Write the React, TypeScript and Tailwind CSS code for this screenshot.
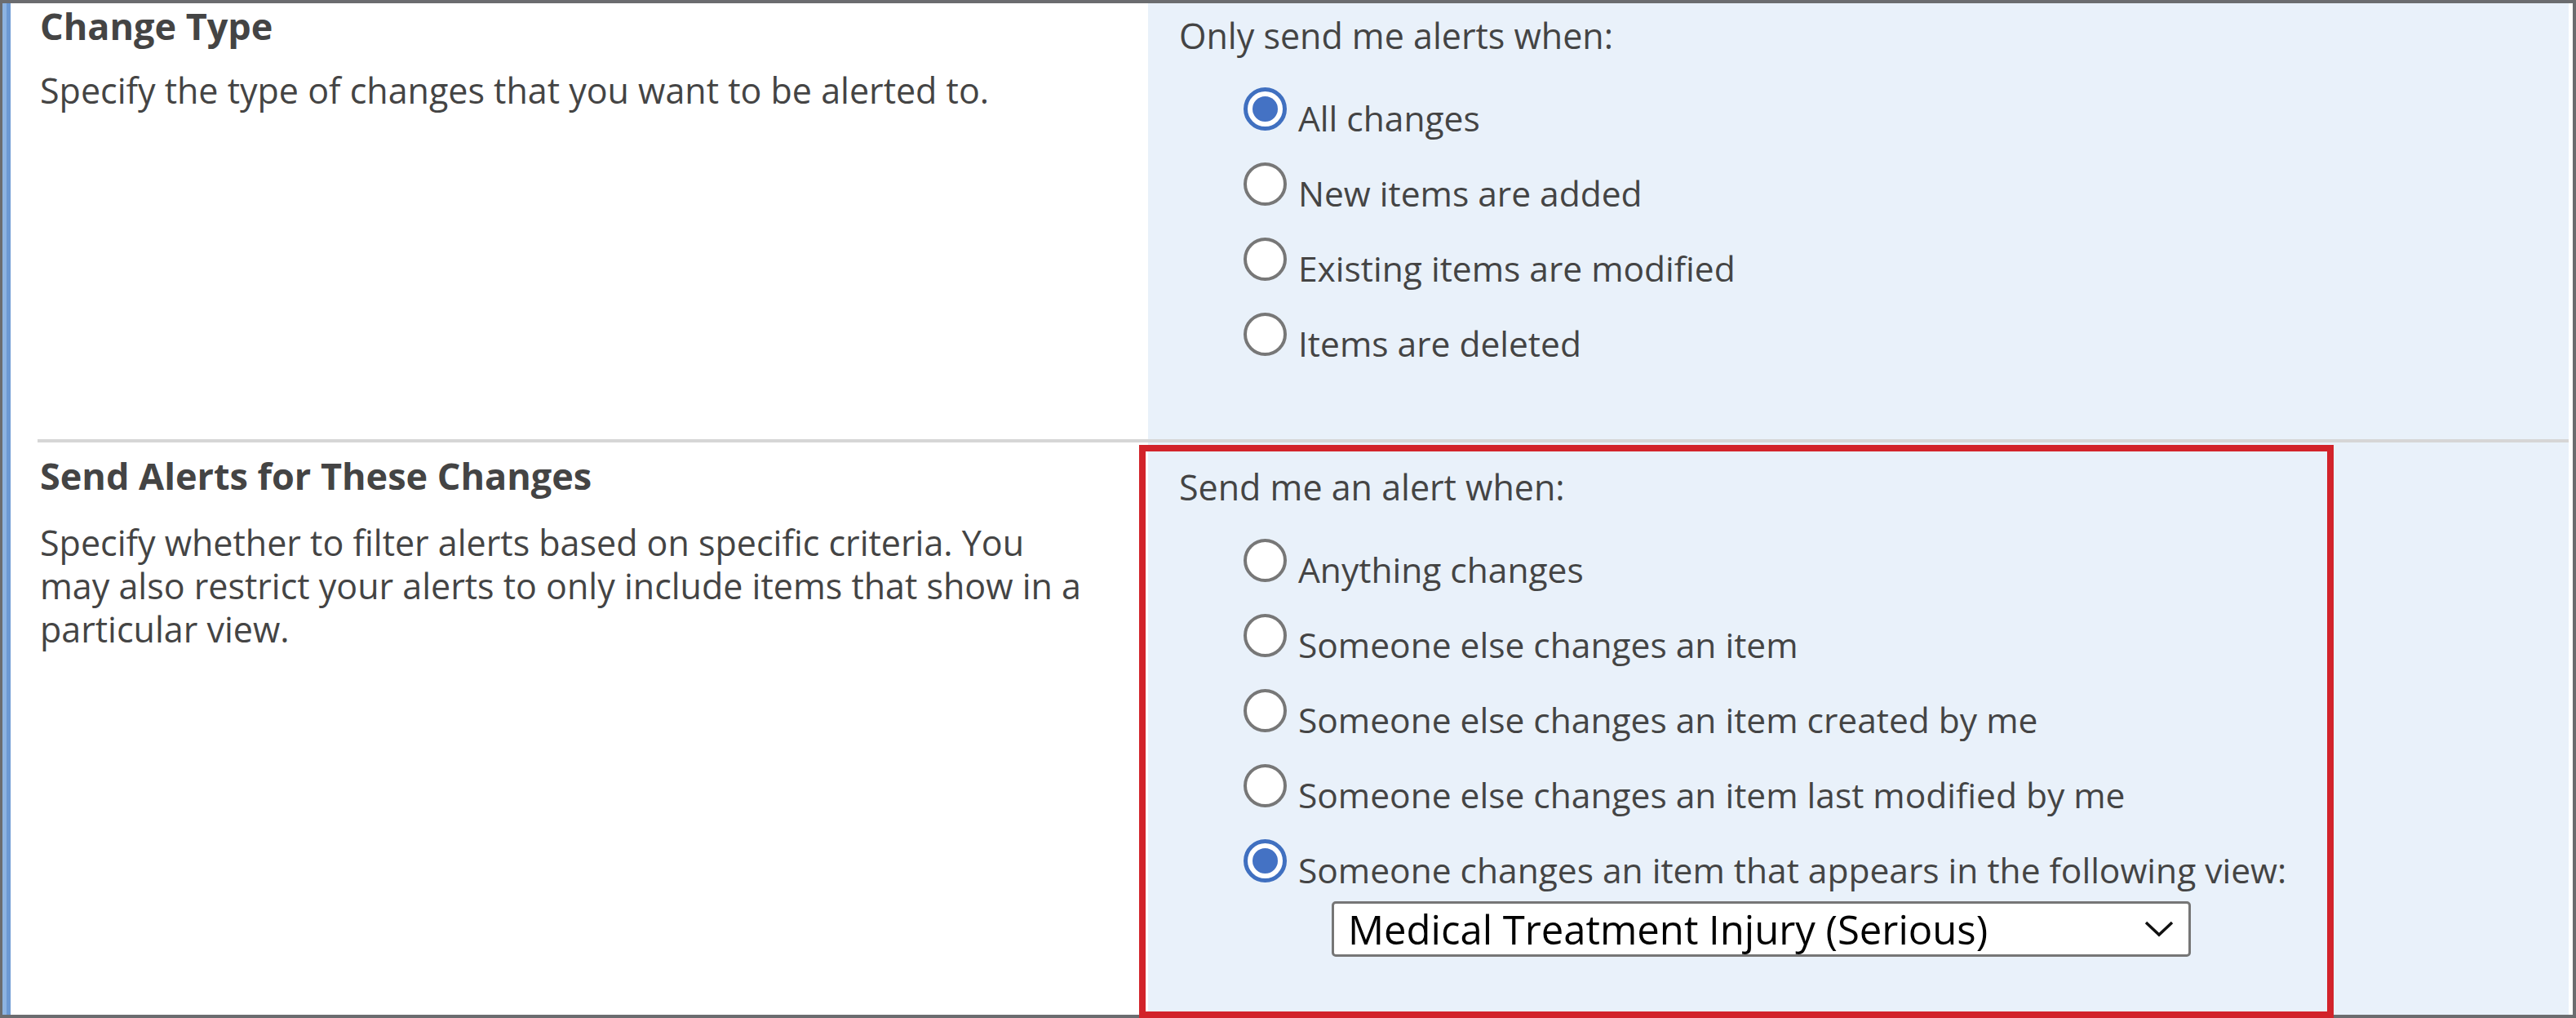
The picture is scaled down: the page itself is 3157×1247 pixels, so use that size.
const font = "font-['Open_Sans','Liberation_Sans',sans-serif]";

type Choice = { label: string; checked?: boolean };

const changeTypes: Choice[] = [
  { label: "All changes", checked: true },
  { label: "New items are added" },
  { label: "Existing items are modified" },
  { label: "Items are deleted" },
];

const alertWhen: Choice[] = [
  { label: "Anything changes" },
  { label: "Someone else changes an item" },
  { label: "Someone else changes an item created by me" },
  { label: "Someone else changes an item last modified by me" },
  { label: "Someone changes an item that appears in the following view:", checked: true },
];

export default function App() {
  return (
    <div className={`relative flex h-[1247px] w-[3157px] border-b-4 border-l-[3px] border-r-4 border-t-4 border-[#6b6c6f] bg-white text-[#444] ${font}`}>
      {/* left accent stripe */}
      <div className="flex w-[10px] shrink-0">
        <div className="w-[5px] bg-[#8cb3e2]" />
        <div className="w-[5px] bg-[#6c99d4]" />
      </div>

      <div className="flex flex-1 flex-col pr-[5px]">
        <section className="flex h-[534px]">
          <SectionInfo
            title="Change Type"
            className="pt-0"
            descClass="mt-[24px]"
            lines={["Specify the type of changes that you want to be alerted to."]}
          />
          <div className="flex-1 bg-[#e9f1fa] pl-[38px] pt-[12px]">
            <p className="text-[43px] leading-[56px]">Only send me alerts when:</p>
            <RadioList items={changeTypes} />
          </div>
        </section>

        <div className="ml-[33px] h-[4px] bg-[#d6d6d6]" />

        <section className="flex flex-1">
          <SectionInfo
            title="Send Alerts for These Changes"
            className="pt-[13px]"
            descClass="mt-[27px]"
            lines={[
              "Specify whether to filter alerts based on specific criteria. You",
              "may also restrict your alerts to only include items that show in a",
              "particular view.",
            ]}
          />
          <div className="flex-1 bg-[#e9f1fa] pl-[38px] pt-[27px]">
            <p className="text-[43px] leading-[56px]">Send me an alert when:</p>
            <RadioList items={alertWhen} />
            <div className="ml-[187px] mt-[10px] flex h-[68px] w-[1053px] items-center justify-between rounded-[5px] border-[3px] border-[#767676] bg-white pl-[17px] pr-[18px]">
              <span className="text-[49px] leading-[62px] text-black">Medical Treatment Injury (Serious)</span>
              <svg width="36" height="20" viewBox="0 0 36 20" fill="none">
                <path d="M2 2 L18 17 L34 2" stroke="#111" strokeWidth="3.5" />
              </svg>
            </div>
          </div>
        </section>
      </div>

      {/* highlight frame drawn over the second section */}
      <div className="pointer-events-none absolute left-[1393px] top-[541px] h-[702px] w-[1464px] border-[8px] border-[#d2232a]" />
    </div>
  );
}

function SectionInfo({
  title,
  lines,
  className,
  descClass,
}: {
  title: string;
  lines: string[];
  className: string;
  descClass: string;
}) {
  return (
    <div className={`w-[1394px] shrink-0 pl-[36px] ${className}`}>
      <h3 className="text-[45px] font-bold leading-[56px] text-[#444]">{title}</h3>
      <p className={`whitespace-nowrap text-[43px] leading-[53px] ${descClass}`}>
        {lines.map((line, i) => (
          <span key={i} className="block">
            {line}
          </span>
        ))}
      </p>
    </div>
  );
}

function RadioList({ items }: { items: Choice[] }) {
  return (
    <div className="ml-[79px] mt-[35px] flex flex-col gap-[26px]">
      {items.map((item) => (
        <label key={item.label} className="flex items-start whitespace-nowrap">
          <Radio checked={item.checked} />
          <span className="ml-[14px] pt-[10px] text-[42.5px] leading-[56px]">{item.label}</span>
        </label>
      ))}
    </div>
  );
}

function Radio({ checked }: { checked?: boolean }) {
  if (checked) {
    return (
      <span className="flex h-[53px] w-[53px] shrink-0 items-center justify-center rounded-full border-[5px] border-[#4070c0] bg-white">
        <span className="h-[31px] w-[31px] rounded-full bg-[#4472c4]" />
      </span>
    );
  }
  return <span className="h-[53px] w-[53px] shrink-0 rounded-full border-4 border-[#777] bg-white" />;
}
